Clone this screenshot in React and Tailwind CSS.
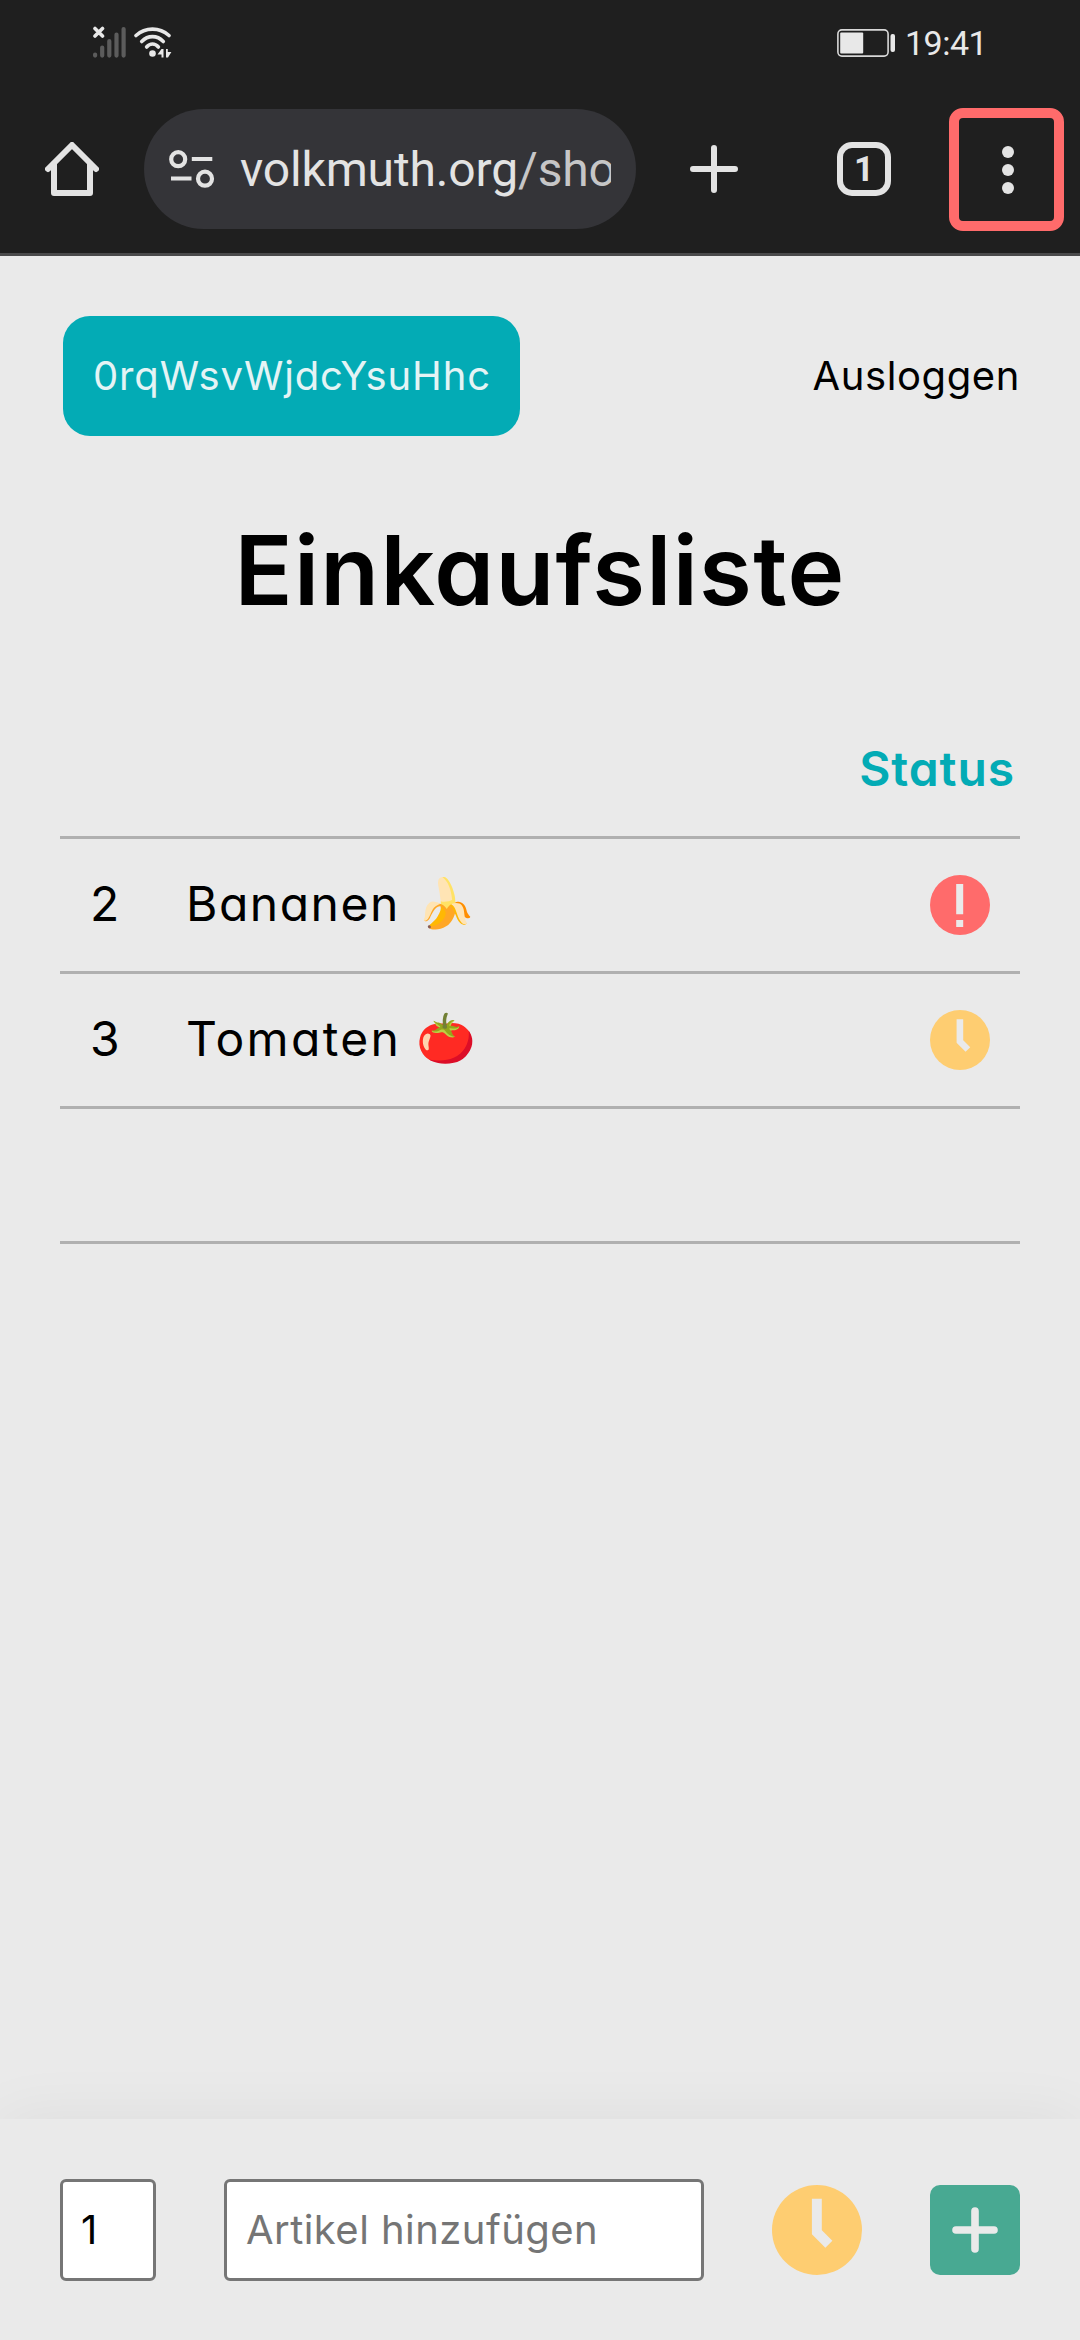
const items = [
  { amount: '2', name: 'Bananen', emoji: '🍌', status: 'urgent', tracking: 'tracking-[1.500px]' },
  { amount: '3', name: 'Tomaten', emoji: '🍅', status: 'open', tracking: 'tracking-[2.300px]' },
];

function SignalIcon() {
  return (
    <svg className="h-8 w-[33px]" viewBox="0 0 33 32" fill="none">
      <g stroke="#5c5c5c" strokeWidth="4.2" strokeLinecap="round">
        <path d="M2.1 28.6v1M9.2 21.5v8.1M16.3 15v14.6M23.5 8.5v21.1M30.6 3v26.6" />
      </g>
      <path d="M2 2.5l7.5 7.5M9.500 2.5L2 10" stroke="#e8e8e8" strokeWidth="3.6" strokeLinecap="round" />
    </svg>
  );
}

function WifiIcon() {
  return (
    <svg className="h-8 w-[38px]" viewBox="0 0 38 32" fill="none">
      <g stroke="#e8e8e8" strokeWidth="3.6" strokeLinecap="round">
        <path d="M2 9.500C11.500 1 25.500 1 35 9.500" />
        <path d="M7.700 15.500C14 9 23 9 29.300 15.500" />
        <path d="M12.600 21C16 17 21 17 24.400 21" />
      </g>
      <circle cx="18.500" cy="27.500" r="3.300" fill="#e8e8e8" />
      <path d="M23.500 28.500l4-5.500h2v8.500h-2v-3zM32 23h1.800v3h3.600l-3.400 5.500h-2z" fill="#e8e8e8" />
    </svg>
  );
}

function BatteryIcon() {
  return (
    <svg className="h-[28px] w-[59px]" viewBox="0 0 59 28" fill="none">
      <rect x="0.900" y="0.900" width="50.200" height="26.200" rx="4" stroke="#d8d8d8" strokeWidth="1.600" />
      <rect x="3.200" y="3.500" width="23" height="21" rx="1" fill="#e8e8e8" />
      <rect x="53.500" y="5" width="4.500" height="18" rx="2" fill="#e8e8e8" />
    </svg>
  );
}

function HomeIcon() {
  return (
    <svg className="h-[54px] w-[54px]" viewBox="0 0 54 54" fill="none" stroke="#e3e3e3" strokeWidth="6" strokeLinecap="round" strokeLinejoin="round">
      <path d="M3 27L27 3l24 24" />
      <path d="M9 22v29h36V22" />
    </svg>
  );
}

function TuneIcon() {
  return (
    <svg className="h-[38px] w-[46px]" viewBox="0 0 46 38" fill="none" stroke="#e3e3e3" strokeWidth="4.200">
      <circle cx="9.200" cy="9.200" r="7" />
      <path d="M22.800 9h20.500M2 28.500h20.500" />
      <circle cx="36" cy="28.700" r="7" />
    </svg>
  );
}

function UrgentIcon() {
  return (
    <svg className="size-[60px]" viewBox="0 0 60 60">
      <circle cx="30" cy="30" r="30" fill="#ff6b6b" />
      <path d="M26.200 9h7v30.300h-7zM26.200 45h7v7h-7z" fill="#eaeaea" />
    </svg>
  );
}

function ClockIcon({ className }) {
  return (
    <svg className={className} viewBox="0 0 60 60">
      <circle cx="30" cy="30" r="30" fill="#fecd71" />
      <path d="M29.900 9.200v22.300l8 8" fill="none" stroke="#eaeaea" strokeWidth="6.600" />
    </svg>
  );
}

function StatusBar() {
  return (
    <div className="flex h-[86px] items-start justify-between pl-[93px] pr-[95px] text-[#e8e8e8]">
      <div className="mt-[26px] flex gap-2">
        <SignalIcon />
        <WifiIcon />
      </div>
      <div className="mt-[23px] flex h-10 items-center gap-[9px]">
        <BatteryIcon />
        <span className="w-20 whitespace-nowrap text-[34px] leading-10 tracking-[-0.500px]">19:41</span>
      </div>
    </div>
  );
}

function BrowserBar() {
  return (
    <div className="flex h-[170px] items-start border-b-[3px] border-[#4a4a4b] pl-[45px] pr-4">
      <div className="mt-14"><HomeIcon /></div>
      <div className="ml-[45px] mt-[23px] flex h-[120px] w-[492px] items-center rounded-full bg-[#343438] pl-[25px]">
        <TuneIcon />
        <div className="ml-[25px] w-[371px] overflow-hidden whitespace-nowrap pt-0.5 text-[48px] leading-[60px] tracking-[-0.150px] text-[#e3e3e3]">
          volkmuth.org<span className="text-[#c6c6c7]">/sho</span>
        </div>
      </div>
      <svg className="ml-[54px] mt-[59px] size-12" viewBox="0 0 48 48" stroke="#e3e3e3" strokeWidth="6" strokeLinecap="round">
        <path d="M24 3v42M3 24h42" />
      </svg>
      <div className="ml-[99px] mt-14 flex size-[54px] items-center justify-center rounded-[15px] border-[6px] border-[#e3e3e3] text-[35px] font-bold leading-none text-[#e3e3e3]">
        1
      </div>
      <div className="ml-[58px] mt-[22px] flex h-[123px] w-[115px] flex-col items-center justify-center gap-1.5 rounded-[14px] border-[10px] border-[#ff6b6b] pl-[3px]">
        <span className="size-3 rounded-full bg-[#e3e3e3]" />
        <span className="size-3 rounded-full bg-[#e3e3e3]" />
        <span className="size-3 rounded-full bg-[#e3e3e3]" />
      </div>
    </div>
  );
}

function ItemRow({ item }) {
  return (
    <div className="flex h-[135px] items-center border-b-[3px] border-[#b0b0b0] pr-[30px]">
      <span className="w-[125px] pb-0.5 pl-[30px] text-[48px] leading-[60px]">{item.amount}</span>
      <span className={`w-[231px] whitespace-nowrap pb-0.5 pl-px text-[48px] leading-[60px] ${item.tracking}`}>{item.name}</span>
      <span className="flex-1 pb-1 text-[48px] leading-[60px]">{item.emoji}</span>
      {item.status === 'urgent' ? <UrgentIcon /> : <ClockIcon className="size-[60px]" />}
    </div>
  );
}

export default function App() {
  return (
    <div className="flex h-[2340px] w-[1080px] flex-col overflow-hidden bg-[#eaeaea] text-black">
      <header className="bg-[#1f1f1f] font-[Roboto,sans-serif]">
        <StatusBar />
        <BrowserBar />
      </header>
      <main className="flex flex-1 flex-col px-[60px] font-[Inter,sans-serif] [font-feature-settings:'cv11']">
        <div className="mt-[60px] flex h-[120px] items-center justify-between pl-[3px] text-[40px]">
          <div className="flex h-[120px] w-[457px] items-center whitespace-nowrap rounded-[27px] bg-[#03abb5] pl-[30px] tracking-[0.850px] text-[#e4f4f5]">
            0rqWsvWjdcYsuHhc
          </div>
          <span className="tracking-[0.600px]">Ausloggen</span>
        </div>
        <h1 className="mt-[74px] text-center text-[96px] font-semibold leading-[120px] tracking-[1.300px]">Einkaufsliste</h1>
        <section className="mt-[66px]">
          <div className="flex h-[143px] items-center justify-end border-b-[3px] border-[#b0b0b0] pr-[5px] pt-1.5 text-[48px] font-semibold tracking-[0.900px] text-[#03abb5]">
            Status
          </div>
          {items.map((item) => <ItemRow key={item.name} item={item} />)}
          <div className="h-[135px] border-b-[3px] border-[#b0b0b0]" />
        </section>
      </main>
      <footer className="flex h-[221px] items-center justify-between bg-[#eaeaea] px-[60px] pt-px font-[Inter,sans-serif] text-[40px] shadow-[0_0_60px_rgba(0,0,0,0.06)] [font-feature-settings:'cv11']">
        <div className="flex h-[102px] w-24 items-center rounded-md border-[3px] border-[#767676] bg-white pl-[18px]">1</div>
        <div className="flex h-[102px] w-[480px] items-center whitespace-nowrap rounded-md border-[3px] border-[#767676] bg-white pl-[19px] tracking-[0.450px] text-[#757575]">
          Artikel hinzufügen
        </div>
        <ClockIcon className="size-[90px]" />
        <div className="flex size-[90px] items-center justify-center rounded-[10px] bg-[#48a992]">
          <svg className="size-[46px]" viewBox="0 0 46 46" stroke="#eaeaea" strokeWidth="7.600" strokeLinecap="round">
            <path d="M23 4v38M4 23h38" />
          </svg>
        </div>
      </footer>
    </div>
  );
}
